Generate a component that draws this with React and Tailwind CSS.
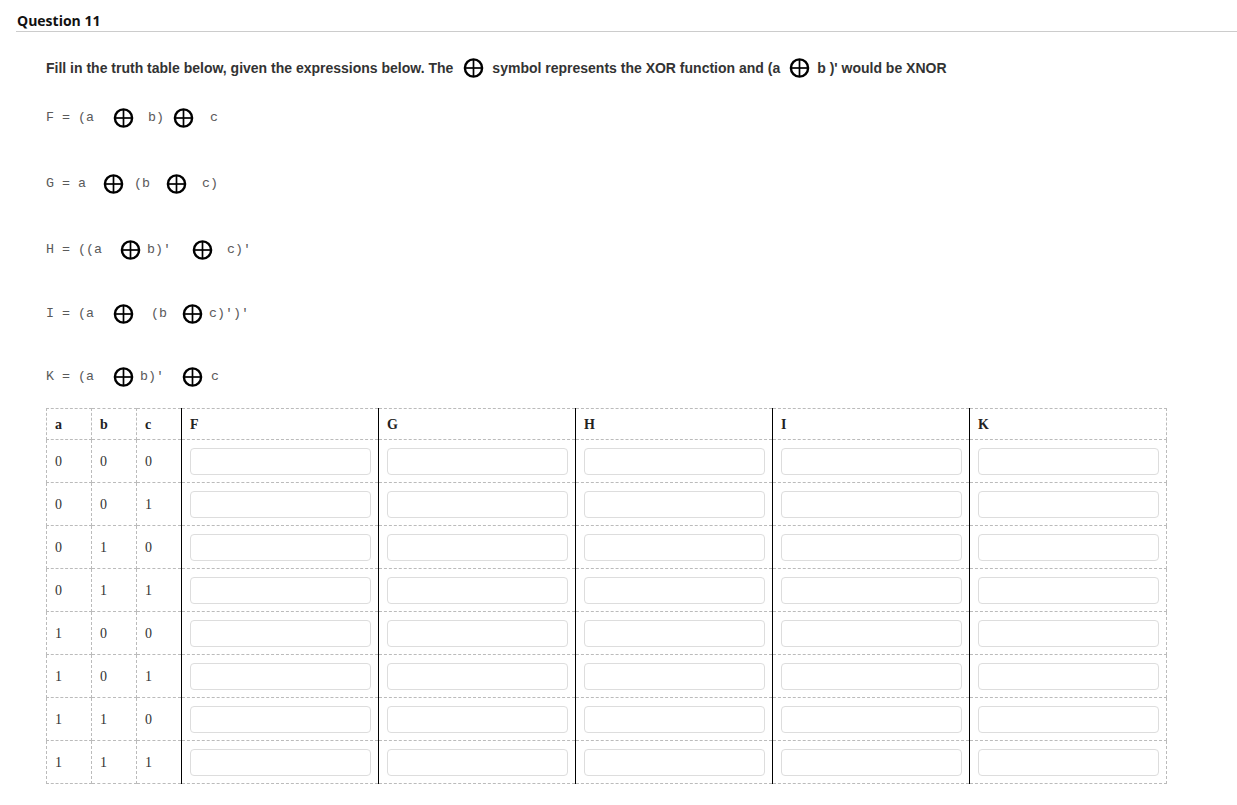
import React from 'react'

// Circle-plus glyph used for XOR in the question text
function Xor({ className = '' }) {
  return (
    <svg width="21" height="20" viewBox="0 0 21 20" className={`shrink-0 ${className}`}>
      <circle cx="10.5" cy="10" r="8.6" fill="none" stroke="#000" strokeWidth="2.4" />
      <line x1="2.2" y1="10" x2="18.8" y2="10" stroke="#000" strokeWidth="1.7" />
      <line x1="10.5" y1="1.6" x2="10.5" y2="18.4" stroke="#000" strokeWidth="1.7" />
    </svg>
  )
}

const mono = "font-['Liberation_Mono','Courier_New',monospace] text-[13.33px] text-[#5a5a5a] whitespace-pre leading-none"

// each expression: list of [kind, value, marginLeft]
const expressions = [
  { mt: 'mt-[28px]', parts: [['t', 'F = (a', 0], ['x', null, 19], ['t', 'b)', 14], ['x', null, 9], ['t', 'c', 16]] },
  { mt: 'mt-[44px]', parts: [['t', 'G = a', 0], ['x', null, 17], ['t', '(b', 10], ['x', null, 16], ['t', 'c)', 15]] },
  { mt: 'mt-[44px]', parts: [['t', 'H = ((a', 0], ['x', null, 18], ['t', "b)'", 6], ['x', null, 21], ['t', "c)'", 14]] },
  { mt: 'mt-[42px]', parts: [['t', 'I = (a', 0], ['x', null, 19], ['t', '(b', 17], ['x', null, 15], ['t', "c)')'", 6]] },
  { mt: 'mt-[41px]', parts: [['t', 'K = (a', 0], ['x', null, 19], ['t', "b)'", 6], ['x', null, 18], ['t', 'c', 8]] },
]

const marginClass = {
  0: 'ml-0', 6: 'ml-[6px]', 8: 'ml-[8px]', 9: 'ml-[9px]', 10: 'ml-[10px]', 14: 'ml-[14px]',
  15: 'ml-[15px]', 16: 'ml-[16px]', 17: 'ml-[17px]', 18: 'ml-[18px]', 19: 'ml-[19px]', 21: 'ml-[21px]',
}

const rows = [
  [0, 0, 0], [0, 0, 1], [0, 1, 0], [0, 1, 1],
  [1, 0, 0], [1, 0, 1], [1, 1, 0], [1, 1, 1],
]

const outputs = ['F', 'G', 'H', 'I', 'K']

const cell = 'border border-dashed border-[#bbb] pl-[8px] text-left align-middle'
const outCell = 'border border-dashed border-[#bbb] [border-left-style:solid] border-l-black pl-[8px] text-left align-middle'

export default function App() {
  return (
    <div className="min-h-screen bg-white">
      {/* heading */}
      <div className="ml-[16px] pt-[11px] pb-[1px] border-b border-[#ccc]">
        <h2 className="pl-[1px] font-['Open_Sans',sans-serif] font-bold text-[14px] leading-[19px] text-[#111]">
          Question 11
        </h2>
      </div>

      <div className="pl-[46px]">
        {/* instructions */}
        <div className="mt-[25px] h-[22px] flex items-center font-['Liberation_Sans',Arial,sans-serif] font-bold text-[14px] text-[#333] whitespace-pre">
          <span>Fill in the truth table below, given the expressions below. The</span>
          <Xor className="ml-[10px]" />
          <span className="ml-[8px]">symbol represents the XOR function and (a</span>
          <Xor className="ml-[9px]" />
          <span className="ml-[7px]">b )' would be XNOR</span>
        </div>

        {/* expressions */}
        {expressions.map((ex, i) => (
          <div key={i} className={`${ex.mt} h-[22px] flex items-center`}>
            {ex.parts.map(([kind, val, ml], j) =>
              kind === 'x' ? (
                <Xor key={j} className={marginClass[ml]} />
              ) : (
                <span key={j} className={`${mono} ${marginClass[ml]}`}>{val}</span>
              )
            )}
          </div>
        ))}

        {/* truth table */}
        <table className="mt-[20px] table-fixed border-collapse w-[1120px] font-['Liberation_Serif','Times_New_Roman',serif]">
          <colgroup>
            <col className="w-[45px]" />
            <col className="w-[45px]" />
            <col className="w-[45px]" />
            <col className="w-[197px]" />
            <col className="w-[197px]" />
            <col className="w-[197px]" />
            <col className="w-[197px]" />
            <col className="w-[197px]" />
          </colgroup>
          <thead>
            <tr className="h-[31px]">
              {['a', 'b', 'c'].map(h => (
                <th key={h} className={`${cell} font-bold text-[14px] text-[#222]`}>{h}</th>
              ))}
              {outputs.map(h => (
                <th key={h} className={`${outCell} font-bold text-[14px] text-[#222]`}>{h}</th>
              ))}
            </tr>
          </thead>
          <tbody>
            {rows.map((r, i) => (
              <tr key={i} className="h-[43px]">
                {r.map((v, j) => (
                  <td key={j} className={`${cell} text-[14px] text-[#333]`}>{v}</td>
                ))}
                {outputs.map(o => (
                  <td key={o} className={outCell}>
                    <input
                      type="text"
                      className="block w-[181px] h-[27px] border border-[#ddd] rounded-[4px] bg-white"
                    />
                  </td>
                ))}
              </tr>
            ))}
          </tbody>
        </table>
      </div>
    </div>
  )
}
